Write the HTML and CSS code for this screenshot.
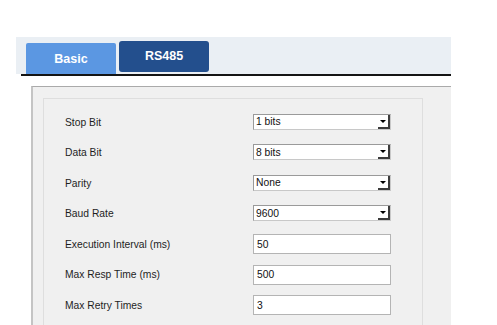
FILE: index.html
```html
<!DOCTYPE html>
<html>
<head>
<meta charset="utf-8">
<link rel="stylesheet" href="styles.css">
</head>
<body>
<div class="panel">
  <div class="tabbar">
    <div class="tab tab-basic">Basic</div>
    <div class="tab tab-active">RS485</div>
  </div>
  <div class="rule"></div>
  <div class="content">
    <div class="fieldset">
      <div class="row"><span class="label">Stop Bit</span><div class="select"><span class="val">1 bits</span><span class="btn"><span class="tri"></span></span></div></div>
      <div class="row"><span class="label">Data Bit</span><div class="select"><span class="val">8 bits</span><span class="btn"><span class="tri"></span></span></div></div>
      <div class="row"><span class="label">Parity</span><div class="select"><span class="val">None</span><span class="btn"><span class="tri"></span></span></div></div>
      <div class="row"><span class="label">Baud Rate</span><div class="select"><span class="val">9600</span><span class="btn"><span class="tri"></span></span></div></div>
      <div class="row"><span class="label">Execution Interval (ms)</span><div class="input">50</div></div>
      <div class="row"><span class="label">Max Resp Time (ms)</span><div class="input">500</div></div>
      <div class="row"><span class="label">Max Retry Times</span><div class="input">3</div></div>
    </div>
  </div>
</div>
</body>
</html>
```
FILE: styles.css
```css
html, body {
  margin: 0;
  padding: 0;
  background: #ffffff;
  overflow: hidden;
}
body {
  width: 497px;
  height: 325px;
  font-family: "Liberation Sans", Arial, sans-serif;
}
.panel {
  margin-left: 16px;
  margin-top: 37px;
  width: 435px;
  height: 288px;
  background: #ffffff;
  display: flex;
  flex-direction: column;
  overflow: hidden;
}
.tabbar {
  flex-shrink: 0;
  height: 37px;
  background: #eaeff4;
  display: flex;
  align-items: flex-end;
  padding-left: 10px;
  gap: 3px;
  box-sizing: border-box;
}
.tab {
  width: 90px;
  display: flex;
  align-items: center;
  justify-content: center;
  color: #ffffff;
  font-weight: bold;
  font-size: 12.5px;
  border-radius: 2px 2px 0 0;
}
.tab-basic {
  height: 31px;
  background: #5b97e2;
  padding-top: 1px;
  box-sizing: border-box;
}
.tab-active {
  height: 31px;
  margin-bottom: 2px;
  background: #234f8d;
  border-radius: 3px;
  padding-bottom: 2px;
  box-sizing: border-box;
}
.rule {
  flex-shrink: 0;
  height: 2px;
  margin-left: 5px;
  background: #141414;
}
.content {
  flex: 1 1 auto;
  min-height: 0;
  overflow: hidden;
  margin-top: 10px;
  margin-left: 15px;
  background: #f0f0f0;
  border-top: 1px solid #aaaaaa;
  border-left: 2px solid #c4c4c4;
  padding: 11px 0 0 10px;
  box-sizing: border-box;
}
.fieldset {
  width: 380px;
  height: 240px;
  border: 1px solid #dedede;
  border-bottom: none;
  box-sizing: border-box;
  padding: 8px 0 0 21px;
}
.row {
  height: 30.5px;
  display: flex;
  align-items: center;
}
.label {
  width: 188px;
  font-size: 10.3px;
  color: #1e1e1e;
}
.select {
  width: 138px;
  height: 16px;
  box-sizing: border-box;
  background: #ffffff;
  border: 1px solid #9a9a9a;
  border-right-color: #c8c8c8;
  border-bottom-color: #c8c8c8;
  display: flex;
  align-items: center;
  justify-content: space-between;
  margin-top: -1px;
}
.val {
  font-size: 10.3px;
  color: #111;
  padding-left: 2px;
}
.btn {
  width: 12px;
  height: 14px;
  box-sizing: border-box;
  border-right: 2px solid #3c3c3c;
  border-bottom: 2px solid #3c3c3c;
  display: flex;
  align-items: center;
  justify-content: center;
  background: #ffffff;
}
.tri {
  width: 0;
  height: 0;
  border-left: 3px solid transparent;
  border-right: 3px solid transparent;
  border-top: 3px solid #000;
  margin-top: 1px;
}
.input {
  width: 138px;
  height: 20px;
  box-sizing: border-box;
  background: #ffffff;
  border: 1px solid #b4b4b4;
  font-size: 10.3px;
  color: #111;
  padding-left: 3px;
  display: flex;
  align-items: center;
}
```
